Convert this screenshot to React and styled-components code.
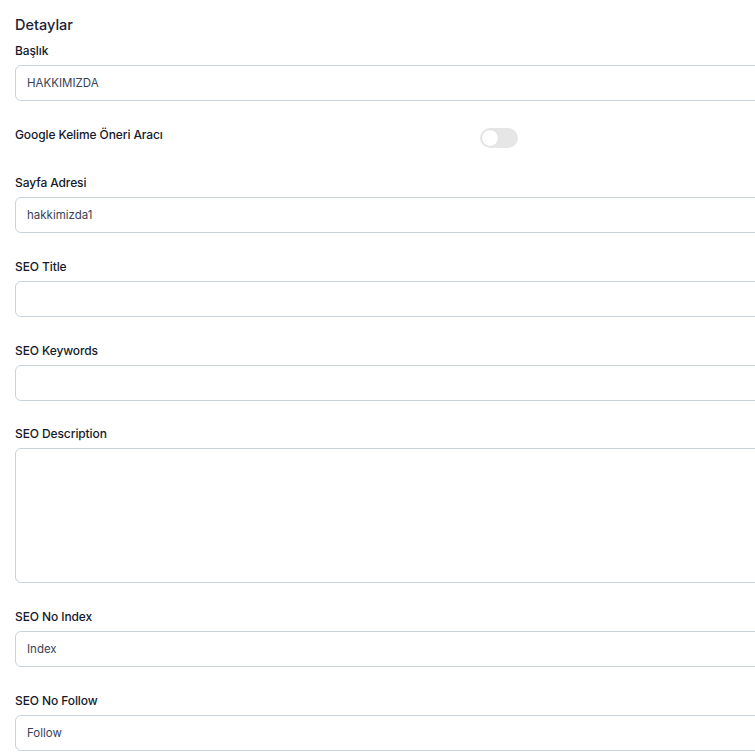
import React, { useState } from 'react';
import styled, { createGlobalStyle } from 'styled-components';

const GlobalStyle = createGlobalStyle`
  html, body {
    margin: 0;
    padding: 0;
    background: #ffffff;
    overflow: hidden;
  }
  body {
    font-family: "Inter", "Noto Sans", "Liberation Sans", sans-serif;
    color: #1b2336;
  }
`;

const Page = styled.div`
  width: 930px;
  padding: 15px 15px 0 15px;
`;

const Heading = styled.h4`
  margin: 0 0 8px 0;
  font-size: 14.5px;
  font-weight: 500;
  line-height: 20px;
  color: #1b2336;
`;

const Field = styled.div`
  display: flex;
  flex-direction: column;
  margin-bottom: ${({ $gap }) => $gap || 26}px;
`;

const Label = styled.label`
  display: block;
  font-size: 12px;
  font-weight: 500;
  line-height: 16px;
  color: #141a2b;
  margin-bottom: 6px;
  letter-spacing: -0.1px;
`;

const Input = styled.input`
  box-sizing: border-box;
  width: 100%;
  height: 36px;
  border: 1px solid #c9d1db;
  border-radius: 6px;
  padding: 0 11px;
  font-family: inherit;
  font-size: 11.5px;
  color: #3a4256;
  background: #fff;
  outline: none;
`;

const TextArea = styled.textarea`
  box-sizing: border-box;
  width: 100%;
  height: 135px;
  border: 1px solid #c9d1db;
  border-radius: 6px;
  padding: 10px 11px;
  font-family: inherit;
  font-size: 11.5px;
  color: #3a4256;
  resize: none;
  outline: none;
  display: block;
`;

const ToggleRow = styled.div`
  display: grid;
  grid-template-columns: 465px 1fr;
  align-items: start;
  margin-bottom: 27px;
`;

const ToggleLabel = styled.span`
  font-size: 12px;
  font-weight: 500;
  line-height: 16px;
  color: #141a2b;
  letter-spacing: -0.1px;
`;

const Switch = styled.button`
  position: relative;
  width: 38px;
  height: 20px;
  margin-top: 1px;
  border: none;
  padding: 0;
  border-radius: 10px;
  background: ${({ $on }) => ($on ? '#5b73e8' : '#e6e6e6')};
  cursor: pointer;
`;

const Knob = styled.span`
  position: absolute;
  top: 2px;
  left: ${({ $on }) => ($on ? '20px' : '2px')};
  width: 16px;
  height: 16px;
  border-radius: 50%;
  background: #ffffff;
  box-shadow: 0 0 0 0.5px #d8d8d8;
`;

const App = () => {
  const [suggest, setSuggest] = useState(false);

  return (
    <>
      <GlobalStyle />
      <Page>
        <Heading>Detaylar</Heading>
        <Field>
          <Label>Başlık</Label>
          <Input defaultValue="HAKKIMIZDA" />
        </Field>
        <ToggleRow>
          <ToggleLabel>Google Kelime Öneri Aracı</ToggleLabel>
          <Switch $on={suggest} onClick={() => setSuggest(!suggest)}>
            <Knob $on={suggest} />
          </Switch>
        </ToggleRow>
        <Field>
          <Label>Sayfa Adresi</Label>
          <Input defaultValue="hakkimizda1" />
        </Field>
        <Field>
          <Label>SEO Title</Label>
          <Input />
        </Field>
        <Field $gap={25}>
          <Label>SEO Keywords</Label>
          <Input />
        </Field>
        <Field>
          <Label>SEO Description</Label>
          <TextArea />
        </Field>
        <Field>
          <Label>SEO No Index</Label>
          <Input defaultValue="Index" />
        </Field>
        <Field>
          <Label>SEO No Follow</Label>
          <Input defaultValue="Follow" />
        </Field>
      </Page>
    </>
  );
};

export default App;
